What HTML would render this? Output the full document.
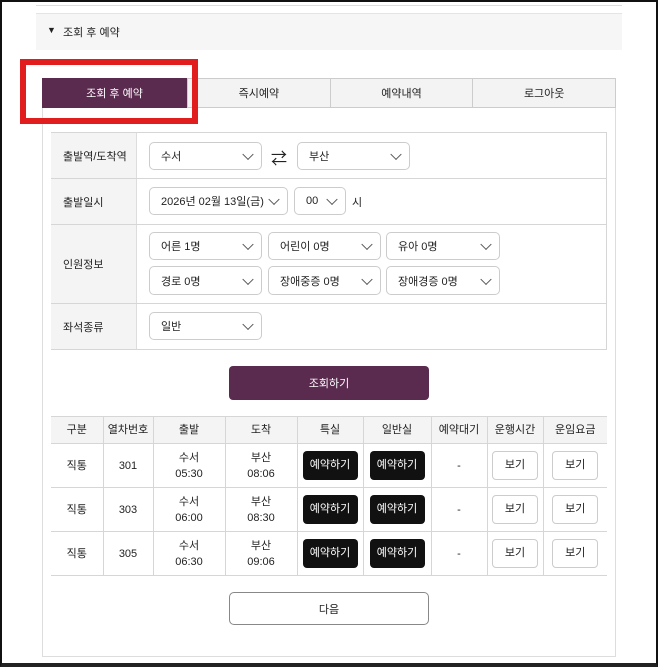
<!DOCTYPE html>
<html><head><meta charset="utf-8"><style>
*{box-sizing:border-box;margin:0;padding:0}
body{width:658px;height:667px;position:relative;background:#fff;font-family:"Liberation Sans","Noto Sans CJK KR",sans-serif;font-size:11px;color:#222;overflow:hidden}
.a{position:absolute}
.sel{position:absolute;border:1px solid #ccc;border-radius:5px;background:#fff;padding-left:11px;display:flex;align-items:center;font-size:11px}
.sel::after{content:"";position:absolute;right:9px;top:50%;width:7px;height:7px;border-right:1.2px solid #555;border-bottom:1.2px solid #555;transform:translateY(-70%) rotate(45deg)}
.lbl{position:absolute;left:51px;width:86px;background:#f4f4f4;display:flex;align-items:center;padding-left:12px;border-right:1px solid #ddd}
.hl{position:absolute;left:51px;width:555px;height:1px;background:#d6d6d6}
table{position:absolute;left:51px;top:416px;width:556px;border-collapse:collapse;font-size:11px}
td,th{border-left:1px solid #d6d6d6;border-bottom:1px solid #d6d6d6;text-align:center;font-weight:normal;line-height:16px}
tr>*:first-child{border-left:none}
th{background:#f4f4f4;height:27px;border-top:1px solid #d6d6d6}
td{height:44px}
.bk{display:inline-block;background:#111;color:#fff;border-radius:4px;width:55px;height:29px;line-height:29px}
.wb{display:inline-block;background:#fff;border:1px solid #ccc;border-radius:4px;width:46px;height:29px;line-height:27px}
</style></head><body>
<div class="a" style="left:0;top:0;width:658px;height:667px;border:2px solid #111;border-bottom:4px solid #222"></div>
<div class="a" style="left:36px;top:2px;width:586px;height:4px;border-bottom:1px solid #ddd"></div>
<div class="a" style="left:36px;top:13px;width:586px;height:37px;background:#f6f6f6;border-top:1px solid #e4e4e4"></div>
<div class="a" style="left:47px;top:25px;font-size:9px">▼</div>
<div class="a" style="left:63px;top:24px">조회 후 예약</div>
<div class="a" style="left:42px;top:108px;width:574px;height:549px;border:1px solid #ddd;border-top:none"></div>
<div class="a" style="left:42px;top:78px;width:145px;height:30px;background:#5a2a4f;color:#fff;display:flex;align-items:center;justify-content:center">조회 후 예약</div>
<div class="a" style="left:187px;top:78px;width:429px;height:30px;background:#f3f3f3;border:1px solid #ccc;display:flex">
<div style="flex:1;display:flex;align-items:center;justify-content:center;border-right:1px solid #ccc">즉시예약</div>
<div style="flex:1;display:flex;align-items:center;justify-content:center;border-right:1px solid #ccc">예약내역</div>
<div style="flex:1;display:flex;align-items:center;justify-content:center">로그아웃</div></div>
<div class="a" style="left:20px;top:59px;width:178px;height:65px;border:6px solid #e11d1d"></div>
<div class="a" style="left:51px;top:132px;width:556px;height:218px;border:1px solid #d6d6d6;border-left:none;border-right:1px solid #d6d6d6"></div>
<div class="lbl" style="top:133px;height:45px">출발역/도착역</div>
<div class="lbl" style="top:179px;height:45px">출발일시</div>
<div class="lbl" style="top:225px;height:78px">인원정보</div>
<div class="lbl" style="top:304px;height:45px">좌석종류</div>
<div class="hl" style="top:178px"></div><div class="hl" style="top:224px"></div><div class="hl" style="top:303px"></div>
<div class="sel" style="left:149px;top:142px;width:113px;height:28px">수서</div>
<div class="a" style="left:271px;top:145px;font-size:16px">⇄</div>
<div class="sel" style="left:297px;top:142px;width:113px;height:28px">부산</div>
<div class="sel" style="left:149px;top:187px;width:139px;height:28px">2026년 02월 13일(금)</div>
<div class="sel" style="left:294px;top:187px;width:52px;height:28px">00</div>
<div class="a" style="left:352px;top:194px">시</div>
<div class="sel" style="left:149px;top:232px;width:113px;height:28px">어른 1명</div>
<div class="sel" style="left:268px;top:232px;width:113px;height:28px">어린이 0명</div>
<div class="sel" style="left:386px;top:232px;width:114px;height:28px">유아 0명</div>
<div class="sel" style="left:149px;top:266px;width:113px;height:29px">경로 0명</div>
<div class="sel" style="left:268px;top:266px;width:113px;height:29px">장애중증 0명</div>
<div class="sel" style="left:386px;top:266px;width:114px;height:29px">장애경증 0명</div>
<div class="sel" style="left:149px;top:312px;width:113px;height:28px">일반</div>
<div class="a" style="left:229px;top:366px;width:200px;height:34px;background:#5a2a4f;color:#fff;border-radius:4px;display:flex;align-items:center;justify-content:center">조회하기</div>
<table>
<colgroup><col style="width:52px"><col style="width:50px"><col style="width:72px"><col style="width:72px"><col style="width:66px"><col style="width:68px"><col style="width:56px"><col style="width:56px"><col style="width:64px"></colgroup>
<tr><th>구분</th><th>열차번호</th><th>출발</th><th>도착</th><th>특실</th><th>일반실</th><th>예약대기</th><th>운행시간</th><th>운임요금</th></tr>
<tr><td>직통</td><td>301</td><td>수서<br>05:30</td><td>부산<br>08:06</td><td><span class="bk">예약하기</span></td><td><span class="bk">예약하기</span></td><td>-</td><td><span class="wb">보기</span></td><td><span class="wb">보기</span></td></tr>
<tr><td>직통</td><td>303</td><td>수서<br>06:00</td><td>부산<br>08:30</td><td><span class="bk">예약하기</span></td><td><span class="bk">예약하기</span></td><td>-</td><td><span class="wb">보기</span></td><td><span class="wb">보기</span></td></tr>
<tr><td>직통</td><td>305</td><td>수서<br>06:30</td><td>부산<br>09:06</td><td><span class="bk">예약하기</span></td><td><span class="bk">예약하기</span></td><td>-</td><td><span class="wb">보기</span></td><td><span class="wb">보기</span></td></tr>
</table>
<div class="a" style="left:229px;top:592px;width:200px;height:33px;border:1px solid #888;border-radius:5px;display:flex;align-items:center;justify-content:center">다음</div>
</body></html>
